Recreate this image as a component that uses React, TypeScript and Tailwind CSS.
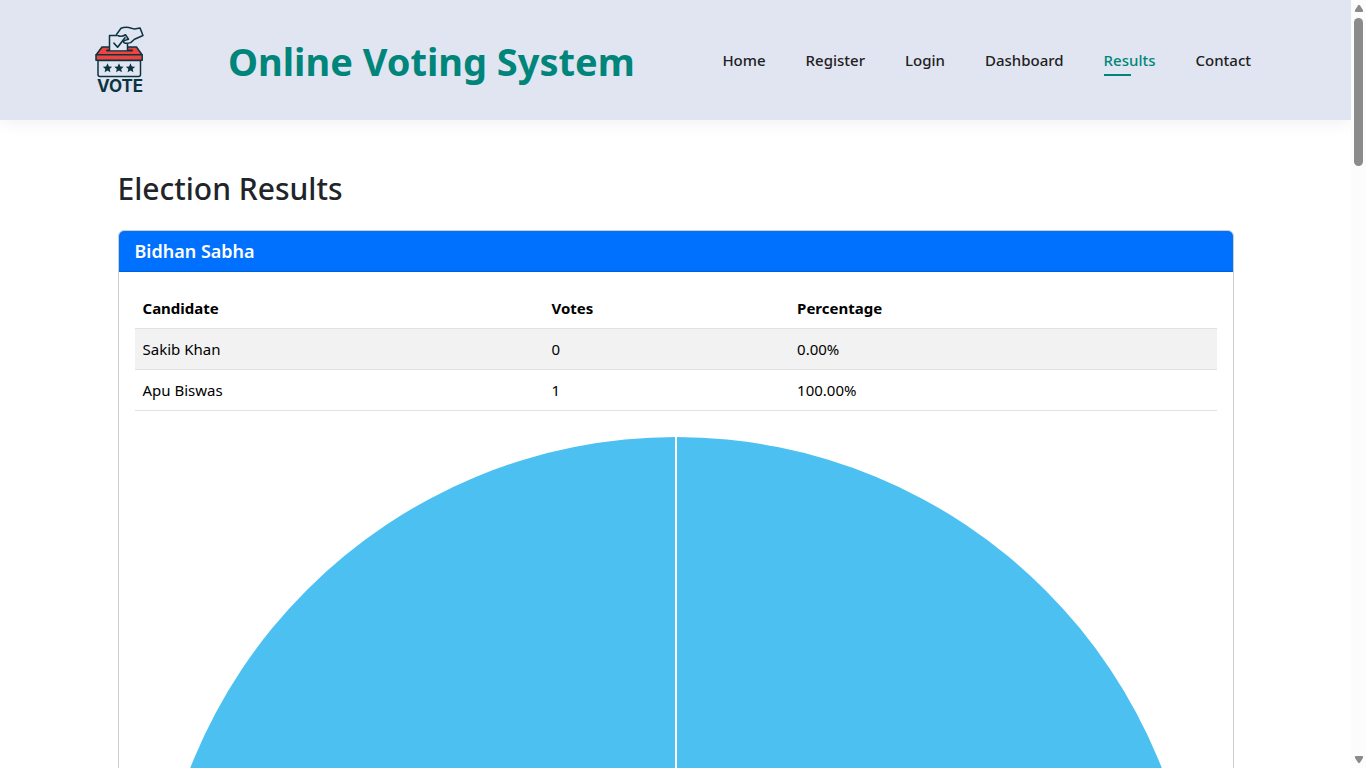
const navItems = [
  { label: "Home", href: "#home" },
  { label: "Register", href: "#register" },
  { label: "Login", href: "#login" },
  { label: "Dashboard", href: "#dashboard" },
  { label: "Results", href: "#results", active: true },
  { label: "Contact", href: "#contact" },
];

const candidates = [
  { name: "Sakib Khan", votes: 0 },
  { name: "Apu Biswas", votes: 1 },
];

const totalVotes = candidates.reduce((sum, c) => sum + c.votes, 0);

function Star({ x }: { x: number }) {
  return (
    <path
      transform={`translate(${x} 53)`}
      fill="#0b3441"
      stroke="none"
      d="M0-4.7 1.4-1.6 4.7-1.3 2.2.9 2.9 4.2 0 2.5-2.9 4.2-2.2.9-4.7-1.3-1.4-1.6Z"
    />
  );
}

function Logo() {
  return (
    <a href="#home" className="flex w-[50px] flex-col items-center text-[#0b3441]">
      <svg
        viewBox="15 11 50 52"
        className="h-[52px] w-[50px]"
        fill="none"
        stroke="#0b3441"
        strokeWidth="1.5"
        strokeLinejoin="round"
        strokeLinecap="round"
        aria-hidden="true"
      >
        <path d="M18 45.5h42.5v14a2 2 0 0 1-2 2H20a2 2 0 0 1-2-2Z" />
        <path d="M22 32h34.5l5.5 7.8H16.2Z" fill="#ee4440" />
        <path d="M16 39.8h46.2v5.4H16Z" fill="#ee4440" />
        <path d="M27 35.6h25" strokeWidth="2" />
        <path d="M29.5 35.2V20.6h18v14.6" fill="#e1e5f1" />
        <path
          d="M36.5 19.5l4.5-6.2c3-1.1 7-1.2 10.5 0l3 .8 5.5-1.2 3 7.6-8.5 3.7-3.8 3.4c-2.7.9-5 1.2-6.7 0-1-.8-.2-2 1-2.2l3.5-1.2-3-4.5c-2.3 1.8-4.8 2-7 1"
          fill="#e1e5f1"
        />
        <path d="M34 28.2l3.6 4 7.4-9.4" strokeWidth="1.7" />
        <Star x={27.5} />
        <Star x={39} />
        <Star x={50.5} />
      </svg>
      <span className="font-[family-name:Inter] text-[17px] leading-4 font-bold">VOTE</span>
    </a>
  );
}

function Header() {
  return (
    <header className="relative flex h-[120px] shrink-0 items-center bg-[#e1e5f1] pr-[100px] pl-[95px] shadow-[0_0_18px_rgba(0,0,0,0.08)]">
      <Logo />
      <p className="ml-[83px] pt-0.5 text-[38px] leading-[48px] font-bold whitespace-nowrap text-[#00857a]">
        Online Voting System
      </p>
      <nav aria-label="Main" className="ml-auto pt-1">
        <ul className="flex gap-10">
          {navItems.map((item) => (
            <li key={item.label}>
              <a
                href={item.href}
                aria-current={item.active ? "page" : undefined}
                className={
                  item.active
                    ? "flex flex-col gap-0.5 text-[15px] leading-6 font-medium text-[#00857a]"
                    : "flex flex-col gap-0.5 text-[15px] leading-6 font-medium text-[#212121]"
                }
              >
                {item.label}
                <span className={item.active ? "h-0.5 w-[27px] bg-[#00857a]" : "h-0.5"} />
              </a>
            </li>
          ))}
        </ul>
      </nav>
    </header>
  );
}

function ResultsTable() {
  return (
    <table className="w-full table-fixed text-left text-[15px] leading-6 text-black">
      <colgroup>
        <col className="w-[37.8%]" />
        <col className="w-[22.7%]" />
        <col />
      </colgroup>
      <thead>
        <tr className="border-b border-[#dee2e6]">
          <th className="p-2 font-bold">Candidate</th>
          <th className="p-2 font-bold">Votes</th>
          <th className="p-2 font-bold">Percentage</th>
        </tr>
      </thead>
      <tbody>
        {candidates.map((c) => (
          <tr key={c.name} className="border-b border-[#dee2e6] odd:bg-[#f2f2f2]">
            <td className="p-2">{c.name}</td>
            <td className="p-2">{c.votes}</td>
            <td className="p-2">{((c.votes / totalVotes) * 100).toFixed(2)}%</td>
          </tr>
        ))}
      </tbody>
    </table>
  );
}

function PieChart() {
  return (
    <svg viewBox="0 0 1082 1082" className="mt-4 w-full" role="img" aria-label="Apu Biswas 100.00%">
      <circle cx="541" cy="532" r="522" fill="#4dc0f2" />
      <path d="M541 532V9" stroke="#fff" strokeWidth="2" />
    </svg>
  );
}

function Scrollbar() {
  return (
    <div aria-hidden="true" className="flex w-[15px] shrink-0 flex-col items-center justify-between bg-[#fcfcfc] py-1">
      <div className="flex flex-col items-center gap-1.5">
        <svg viewBox="0 0 10 8" className="h-2 w-[10px]" fill="#8b8b8b">
          <path d="M4 1.5Q5 .2 6 1.5L9 6Q9.7 8 8 8H2Q.3 8 1 6Z" />
        </svg>
        <div className="h-[148px] w-[9px] rounded-full bg-[#8b8b8b]" />
      </div>
      <svg viewBox="0 0 10 8" className="h-2 w-[10px]" fill="#8b8b8b">
        <path d="M4 6.5Q5 7.8 6 6.5L9 2Q9.7 0 8 0H2Q.3 0 1 2Z" />
      </svg>
    </div>
  );
}

export default function App() {
  return (
    <div className="flex h-screen overflow-hidden bg-white font-['Noto_Sans',sans-serif] text-[#212529]">
      <div className="min-w-0 flex-1 overflow-x-hidden overflow-y-auto [scrollbar-width:none]">
        <Header />
        <main className="mx-auto max-w-[1140px] px-3 pt-[50px] pb-12">
          <h1 className="mb-[22px] text-[30px] leading-[38px] font-medium">Election Results</h1>
          <section className="overflow-hidden rounded-md border border-[#cfcfcf]">
            <h2 className="border-b border-[#0060d9] bg-[#0070ff] px-4 py-2 text-lg leading-6 font-semibold text-white">
              Bidhan Sabha
            </h2>
            <div className="p-4">
              <ResultsTable />
              <PieChart />
            </div>
          </section>
        </main>
      </div>
      <Scrollbar />
    </div>
  );
}
